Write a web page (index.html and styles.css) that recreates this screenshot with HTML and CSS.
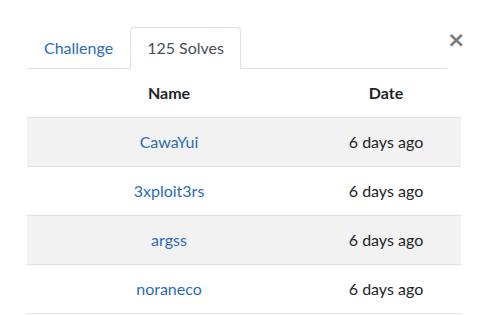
FILE: index.html
```html
<!DOCTYPE html>
<html lang="en">
<head>
    <meta charset="UTF-8">
    <meta name="viewport" content="width=device-width, initial-scale=1.0">
    <title>Solves</title>
    <link rel="stylesheet" href="styles.css">
</head>
<body>
    <div class="modal-body">
        <div class="tab-head">
            <ul class="nav-tabs">
                <li><a class="nav-link" href="#">Challenge</a></li>
                <li><a class="nav-link active" href="#">125 Solves</a></li>
            </ul>
            <button class="close" type="button">&times;</button>
        </div>

        <table class="solves">
            <thead>
                <tr>
                    <th class="col-name">Name</th>
                    <th class="col-date">Date</th>
                </tr>
            </thead>
            <tbody>
                <tr>
                    <td class="col-name"><a href="#">CawaYui</a></td>
                    <td class="col-date">6 days ago</td>
                </tr>
                <tr>
                    <td class="col-name"><a href="#">3xploit3rs</a></td>
                    <td class="col-date">6 days ago</td>
                </tr>
                <tr>
                    <td class="col-name"><a href="#">argss</a></td>
                    <td class="col-date">6 days ago</td>
                </tr>
                <tr>
                    <td class="col-name"><a href="#">noraneco</a></td>
                    <td class="col-date">6 days ago</td>
                </tr>
            </tbody>
        </table>
    </div>
</body>
</html>
```

FILE: styles.css
```css
body {
    margin: 0;
    font-family: Lato, "Open Sans", sans-serif;
    font-size: 16px;
    line-height: 1.5;
    color: #212529;
    background-color: #fff;
}
a {
    color: #2c6db4;
    text-decoration: none;
}
.modal-body {
    padding: 27px 22px 0 27px;
}
.tab-head {
    display: flex;
    align-items: flex-start;
}
.nav-tabs {
    flex: 1;
    display: flex;
    list-style: none;
    margin: 0;
    padding: 0;
    border-bottom: 1px solid #dee2e6;
}
.nav-link {
    display: block;
    padding: 8px 16px;
    margin-bottom: -1px;
    border: 1px solid transparent;
    border-radius: 4px 4px 0 0;
}
.nav-link.active {
    color: #495057;
    background-color: #fff;
    border-color: #dee2e6 #dee2e6 #fff;
}
.close {
    width: 14px;
    padding: 0;
    margin-top: 1px;
    border: none;
    background: none;
    font-family: "DejaVu Sans", sans-serif;
    font-size: 22px;
    font-weight: bold;
    line-height: 24px;
    color: #7a7a7a;
    cursor: pointer;
}
.solves {
    width: 100%;
    border-collapse: collapse;
}
.solves th,
.solves td {
    padding: 12px;
    text-align: center;
    white-space: nowrap;
}
.solves th {
    font-weight: bold;
}
.solves td {
    border-top: 1px solid #dee2e6;
}
.solves tbody tr:last-child td {
    border-bottom: 1px solid #dee2e6;
}
.solves tbody tr:nth-child(odd) {
    background-color: #f2f2f2;
}
.col-name {
    width: 260px;
}
```
